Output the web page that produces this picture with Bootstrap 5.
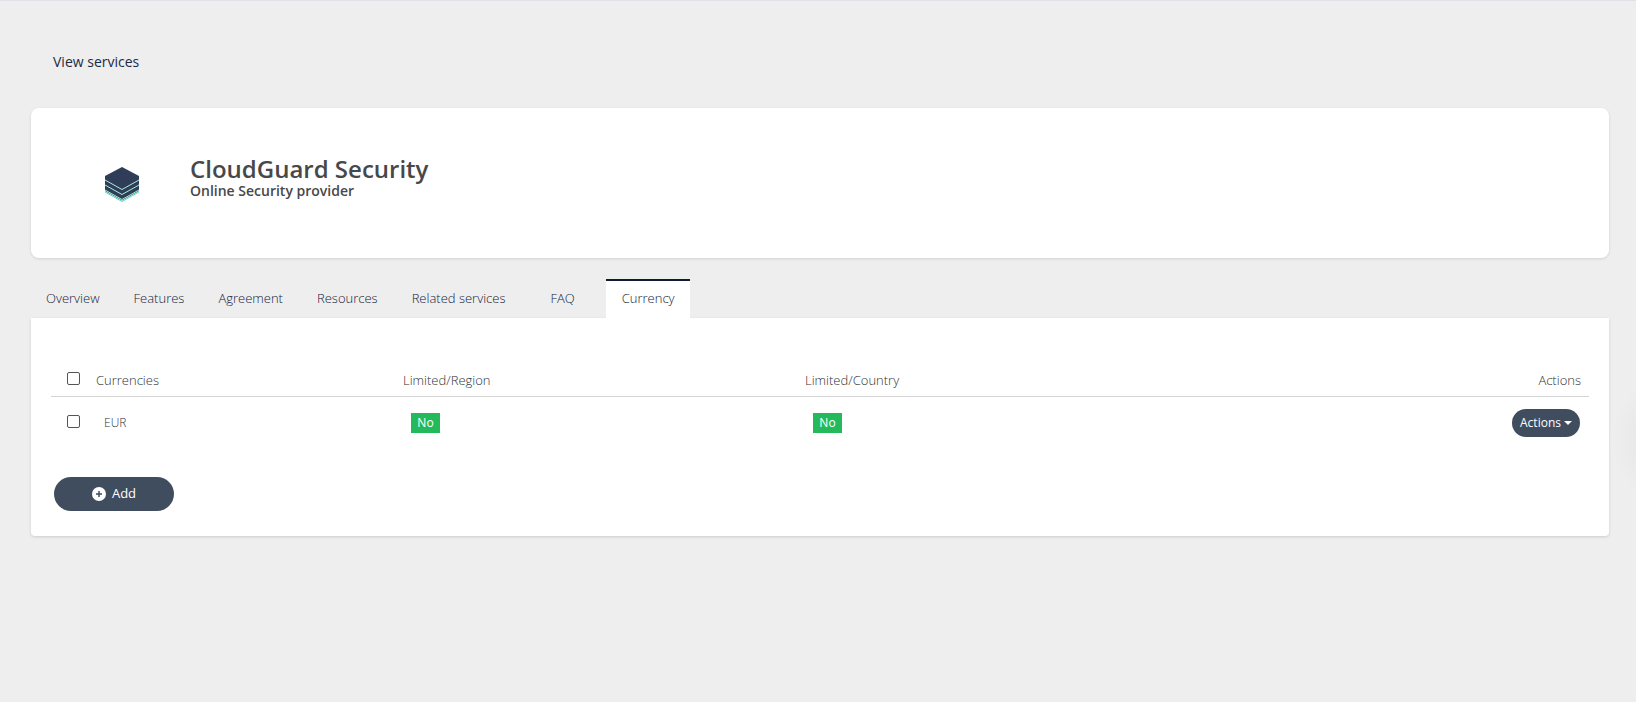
<!DOCTYPE html>
<html lang="en">
<head>
<meta charset="utf-8">
<title>CloudGuard Security</title>
<link href="https://cdn.jsdelivr.net/npm/bootstrap@5.3.0/dist/css/bootstrap.min.css" rel="stylesheet">
<style>
html,body{height:100%}
body{background:#eee;font-family:"Open Sans","Liberation Sans",sans-serif;font-size:13px;color:#555;border-top:1px solid #dfe3e8;overflow:hidden}
.page-wrap{padding:0 27px 0 31px}
.back-link{display:block;padding:51px 22px 0;height:107px;font-size:14px;line-height:19px;color:#1a2b45;text-decoration:none}
.hero-card{background:#fff;border:0;border-radius:8px;height:150px;box-shadow:0 1px 3px rgba(0,0,0,.12);padding:0 0 0 73px}
.hero-logo{width:36px;height:36px;margin-top:4px;margin-right:50px;flex:none}
.hero-text{margin-bottom:12px}
.hero-title{font-size:24px;line-height:28px;font-weight:600;color:#484848;margin:0}
.hero-sub{font-size:14px;line-height:16px;font-weight:600;color:#484848;margin:0}
.svc-tabs{margin-top:21px;border:0;height:39px;gap:3px}
.svc-tabs .nav-link{border:0;border-radius:0;color:#14233a;font-size:13px;font-weight:300;line-height:18px;padding:10px 16px 11px 15px;height:39px;background:transparent}
.svc-tabs .nav-link.tab-faq{padding-left:26px;padding-right:29px}
.svc-tabs .nav-link.active{background:#fff;border-top:2px solid #0d1b33;padding:8px 15px 11px 16px;color:#14233a;margin-left:-1px}
.tab-panel{background:#fff;height:218px;border-radius:0 0 4px 4px;box-shadow:0 1px 3px rgba(0,0,0,.14);padding:32px 20px 0}
.cur-table{width:1538px;margin:0;--bs-table-bg:transparent;color:#333;table-layout:fixed}
.cur-table th,.cur-table td{font-weight:300;font-size:13px;border:0;padding:0;vertical-align:middle}
.cur-table thead tr{height:46px;border-bottom:1px solid #d5d5d5}
.cur-table thead th{padding-top:15px}
.cur-table tbody tr{height:53px}
.cur-table .form-check-input{width:13px;height:13px;margin:0;border:1px solid #555;border-radius:2px;display:block;margin-left:16px;background-color:#fff}
.head-check{position:relative;top:-2px}
.row-check{position:relative;top:-1px}
.cur-table .eur-cell{padding-left:8px;font-size:12px}
.no-tag{display:inline-block;background:#24ba5c;color:#fff;font-size:12px;line-height:20px;height:20px;width:29px;text-align:center;margin-left:8px;font-weight:400}
.btn-slate{background:#3f4d5f;color:#fff;border:0;border-radius:50rem}
.btn-slate:hover{background:#3f4d5f;color:#fff}
.act-btn{font-size:12px;font-weight:400;height:28px;width:68px;padding:0;margin-right:9px;display:inline-flex;align-items:center;justify-content:center;gap:3px}
.act-btn::after{margin:0;border-top-width:.36em;border-left-width:.36em;border-right-width:.36em;vertical-align:middle}
.add-btn{font-size:13px;font-weight:500;height:34px;width:120px;margin:28px 0 0 3px;padding:0;display:flex;align-items:center;justify-content:center;gap:6px}
.add-btn svg{width:14px;height:14px}
.edge-glow{position:fixed;right:-40px;top:395px;width:52px;height:90px;border-radius:50%;background:rgba(0,0,0,.02);filter:blur(8px)}
</style>
</head>
<body>
<div class="page-wrap">
  <a href="#" class="back-link">View services</a>
  <div class="card hero-card d-flex flex-row align-items-center">
    <svg class="hero-logo" viewBox="0 0 36 36" aria-hidden="true">
      <path d="M1 9L18 0l17 9v15L18 33.500 1 24z" fill="#2f3d58"/>
      <path d="M1 13l17 9.500L35 13M1 18l17 9.500L35 18M1 23l17 9.500L35 23" fill="none" stroke="#a6efd7" stroke-width="1"/>
      <path d="M1 25l17 9.500L35 25" fill="none" stroke="#55dcb2" stroke-width="1"/>
    </svg>
    <div class="hero-text">
      <h1 class="hero-title">CloudGuard Security</h1>
      <p class="hero-sub">Online Security provider</p>
    </div>
  </div>
  <ul class="nav nav-tabs svc-tabs">
    <li class="nav-item"><a class="nav-link" href="#">Overview</a></li>
    <li class="nav-item"><a class="nav-link" href="#">Features</a></li>
    <li class="nav-item"><a class="nav-link" href="#">Agreement</a></li>
    <li class="nav-item"><a class="nav-link" href="#">Resources</a></li>
    <li class="nav-item"><a class="nav-link" href="#">Related services</a></li>
    <li class="nav-item"><a class="nav-link tab-faq" href="#">FAQ</a></li>
    <li class="nav-item"><a class="nav-link active" href="#">Currency</a></li>
  </ul>
  <div class="tab-panel">
    <table class="table cur-table">
      <colgroup><col style="width:45px"><col style="width:307px"><col style="width:402px"><col style="width:402px"><col></colgroup>
      <thead>
        <tr>
          <th><input class="form-check-input head-check" type="checkbox" aria-label="Select all"></th>
          <th>Currencies</th>
          <th>Limited/Region</th>
          <th>Limited/Country</th>
          <th class="text-end pe-2">Actions</th>
        </tr>
      </thead>
      <tbody>
        <tr>
          <td><input class="form-check-input row-check" type="checkbox" aria-label="Select EUR"></td>
          <td class="eur-cell">EUR</td>
          <td><span class="no-tag">No</span></td>
          <td><span class="no-tag">No</span></td>
          <td class="text-end"><button type="button" class="btn btn-slate act-btn dropdown-toggle">Actions</button></td>
        </tr>
      </tbody>
    </table>
    <button type="button" class="btn btn-slate add-btn">
      <svg viewBox="0 0 14 14" aria-hidden="true"><circle cx="7" cy="7" r="7" fill="#fff"/><path d="M7 4v6M4 7h6" stroke="#3f4d5f" stroke-width="1.500"/></svg>
      Add
    </button>
  </div>
</div>
<div class="edge-glow"></div>
</body>
</html>
